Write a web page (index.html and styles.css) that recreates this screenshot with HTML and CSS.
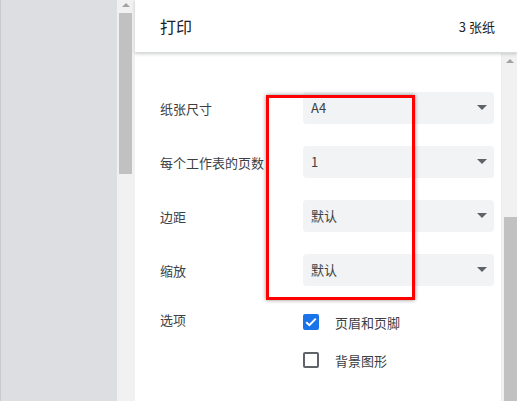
FILE: index.html
```html
<!DOCTYPE html>
<html lang="zh-CN">
<head>
  <meta charset="UTF-8">
  <title>打印</title>
  <link rel="stylesheet" href="styles.css">
</head>
<body>
  <div class="sidebar"></div>

  <div class="scrollbar left-bar">
    <span class="arrow"></span>
    <div class="thumb"></div>
  </div>

  <div class="panel">
    <header class="panel-header">
      <h1>打印</h1>
      <span class="sheets">3 张纸</span>
    </header>

    <div class="panel-body">
      <div class="settings">
        <div class="row">
          <label>纸张尺寸</label>
          <div class="select">A4<span class="caret"></span></div>
        </div>
        <div class="row">
          <label>每个工作表的页数</label>
          <div class="select">1<span class="caret"></span></div>
        </div>
        <div class="row">
          <label>边距</label>
          <div class="select">默认<span class="caret"></span></div>
        </div>
        <div class="row">
          <label>缩放</label>
          <div class="select">默认<span class="caret"></span></div>
        </div>
        <div class="row options">
          <label>选项</label>
          <div class="checks">
            <div class="check">
              <span class="box checked">
                <svg width="12" height="10" viewBox="0 0 12 10"><path d="M1.2 5.2 L4.4 8.2 L10.8 1.6" fill="none" stroke="#fff" stroke-width="2"/></svg>
              </span>
              页眉和页脚
            </div>
            <div class="check">
              <span class="box"></span>
              背景图形
            </div>
          </div>
        </div>

        <div class="highlight"></div>
      </div>

      <div class="scrollbar right-bar">
        <span class="arrow"></span>
        <div class="thumb"></div>
      </div>
    </div>
  </div>
</body>
</html>
```

FILE: styles.css
```css
html, body {
  height: 100%;
}

body {
  margin: 0;
  display: flex;
  font-family: "Noto Sans CJK SC", "Liberation Sans", sans-serif;
  color: #202124;
  overflow: hidden;
}

.sidebar {
  width: 117px;
  background-color: #dcdee2;
  border-left: 1px solid #c9cbcf;
  box-sizing: border-box;
}

.scrollbar {
  background-color: #f1f1f1;
  display: flex;
  flex-direction: column;
  align-items: center;
}

.scrollbar .arrow {
  width: 0;
  height: 0;
  border-left: 4px solid transparent;
  border-right: 4px solid transparent;
  border-bottom: 4px solid #a3a3a3;
}

.scrollbar .thumb {
  background-color: #c1c1c1;
}

.left-bar {
  width: 18px;
}

.left-bar .arrow {
  margin-top: 3px;
}

.left-bar .thumb {
  width: 13px;
  height: 161px;
  margin-top: 6px;
  margin-left: -2px;
}

.panel {
  flex: 1;
  display: flex;
  flex-direction: column;
  background-color: #fff;
}

.panel-header {
  height: 52px;
  display: flex;
  align-items: center;
  justify-content: space-between;
  padding: 0 22px 0 25px;
  border-bottom: 1px solid #dadce0;
  box-shadow: 0 1px 3px rgba(60, 64, 67, 0.25);
  position: relative;
  z-index: 1;
}

.panel-header h1 {
  margin: 0;
  font-size: 16px;
  font-weight: normal;
}

.sheets {
  font-size: 13px;
}

.panel-body {
  flex: 1;
  display: flex;
}

.settings {
  flex: 1;
  padding: 39px 7px 0 25px;
  position: relative;
}

.row {
  display: flex;
  align-items: center;
  height: 32px;
  margin-bottom: 22px;
}

.row label {
  width: 143px;
  font-size: 13px;
  color: #3c4043;
}

.select {
  flex: 1;
  height: 32px;
  line-height: 32px;
  background-color: #f1f3f4;
  border-radius: 4px;
  padding: 0 8px;
  font-size: 13px;
  color: #3c4043;
  position: relative;
}

.caret {
  position: absolute;
  right: 7px;
  top: 13px;
  width: 0;
  height: 0;
  border-left: 5px solid transparent;
  border-right: 5px solid transparent;
  border-top: 5px solid #5f6368;
}

.options {
  align-items: flex-start;
  margin-top: -1px;
}

.options label {
  line-height: 18px;
  margin-top: 4px;
}

.checks {
  display: flex;
  flex-direction: column;
  gap: 20px;
  margin-top: 6px;
}

.check {
  display: flex;
  align-items: center;
  gap: 16px;
  font-size: 13px;
  color: #3c4043;
  height: 18px;
}

.box {
  width: 16px;
  height: 16px;
  box-sizing: border-box;
  border: 2px solid #5f6368;
  border-radius: 2px;
  display: flex;
  align-items: center;
  justify-content: center;
}

.box.checked {
  background-color: #1a73e8;
  border-color: #1a73e8;
}

.highlight {
  position: absolute;
  left: 131px;
  top: 42px;
  width: 149px;
  height: 205px;
  box-sizing: border-box;
  border: 3px solid #ff0000;
  box-shadow: 0 0 4px rgba(0, 0, 0, 0.45);
}

.right-bar {
  width: 15px;
  border-left: 1px solid #ececec;
}

.right-bar .arrow {
  margin-top: 6px;
}

.right-bar .thumb {
  width: 13px;
  flex: 1;
  margin-top: 154px;
  margin-left: 2px;
}
```
